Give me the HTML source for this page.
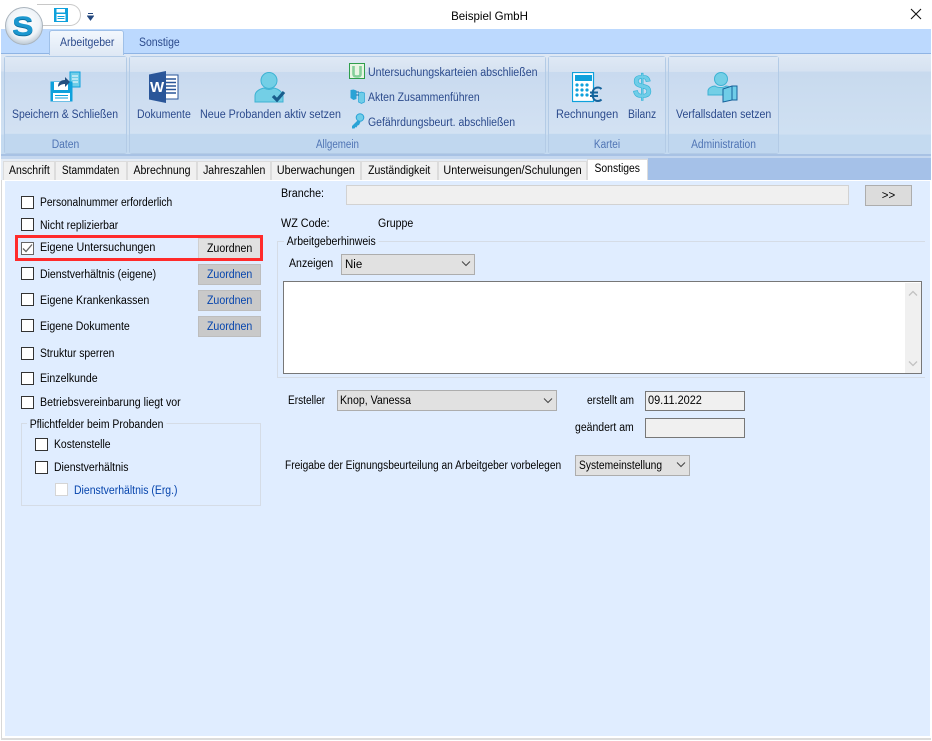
<!DOCTYPE html>
<html><head><meta charset="utf-8">
<style>
html,body{margin:0;padding:0;background:#fff}
#p{position:relative;width:932px;height:741px;overflow:hidden;background:#fff;font-family:"Liberation Sans",sans-serif;font-size:11.5px;color:#000}
#p div,#p span.t,#p svg{position:absolute}
.t{white-space:nowrap;line-height:14px;transform-origin:0 50%}
.rb{color:#2b4a8c}
.cap{color:#4f74b4;text-align:center;transform-origin:50% 50%}
.g{border:1px solid #b3cbe6;border-radius:3px;background:linear-gradient(#c6d8ee,#d6e4f4);box-sizing:border-box;top:56px;height:98px}
.gt{left:0;right:0;top:0;height:15px;background:linear-gradient(#dfe9f5,#d6e2f1)}
.gb{left:0;right:0;bottom:0;height:19px;background:#c0d7ef;border-top:1px solid #cfe0f2}
.tab{top:161px;height:19px;background:#f0f0f0;border:1px solid #dcdcdc;border-bottom:0;box-sizing:border-box;text-align:center;line-height:18px;white-space:nowrap;color:#000}
.tab span,.zb span{display:inline-block}
.cb{width:13px;height:13px;border:1px solid #333;background:#fff;box-sizing:border-box}
.zb{left:198px;width:63px;height:21px;background:#c9c9c9;border:1px solid #bdbdbd;box-sizing:border-box;color:#0645ad;text-align:center;line-height:21px}
.zb span{transform:scaleX(.92)}
.sel{background:#e1e1e1;border:1px solid #adadad;box-sizing:border-box}
.in{background:#f0f0f0;box-sizing:border-box}
</style></head><body><div id="p">

<!-- title bar -->
<div style="left:37px;top:4px;width:44px;height:22px;background:#fff;border:1px solid #c8c8c8;border-left:0;border-radius:0 12px 12px 0;box-sizing:border-box"></div>
<svg style="left:54px;top:8px" width="14" height="14" viewBox="0 0 14 14"><rect width="14" height="14" fill="#0ea1dc"/><rect x="2.500" y="1" width="8.500" height="3.500" fill="#fff"/><rect x="2.500" y="6" width="9" height="7" fill="#fff"/><path d="M3.500 8.500h7M3.500 10.500h7" stroke="#0ea1dc"/></svg>
<svg style="left:87px;top:13px" width="7" height="8" viewBox="0 0 7 8"><path d="M1 .5h5M.5 3h6L3.500 7z" stroke="#24487f" fill="#24487f" stroke-width="1"/></svg>
<span class="t cap" style="left:0;width:979px;top:9px;font-size:12px;color:#000;transform:scaleX(.96)">Beispiel GmbH</span>
<svg style="left:910px;top:8px" width="12" height="12" viewBox="0 0 12 12"><path d="M1 1l10 10M11 1L1 11" stroke="#111" stroke-width="1.100"/></svg>

<!-- ribbon tabs bar -->
<div style="left:1px;top:29px;width:930px;height:25px;background:#bcd9fe"></div>
<div style="left:1px;top:53px;width:930px;height:102px;background:linear-gradient(#dfe9f5 0,#d6e2f1 17px,#c8daee 18px,#cfe0f2 80px,#c4daf0 81px);border-top:1px solid #8fb4e4;box-sizing:border-box"></div>
<div style="left:49px;top:30px;width:75px;height:25px;background:linear-gradient(#f2f7fd,#dfe9f5);border:1px solid #9fc0e8;border-bottom:0;border-radius:3px 3px 0 0;box-sizing:border-box"></div>
<span class="t rb" style="left:60px;top:36px;transform:scaleX(.915)">Arbeitgeber</span>
<span class="t rb" style="left:139px;top:36px;transform:scaleX(.91)">Sonstige</span>

<!-- S logo -->
<div style="left:5px;top:7px;width:38px;height:38px;border-radius:50%;background:radial-gradient(circle at 50% 40%,#ffffff 0,#eef3f8 55%,#b9c6d2 80%,#8e9aa5 100%);border:1px solid #aab4bd;box-sizing:border-box"></div>
<span class="t" style="left:12px;top:13px;font-size:27px;line-height:27px;font-weight:bold;color:#1b97cf;transform:scaleX(1.2);text-shadow:0 1px 0 #0e6d9e">S</span>

<!-- ribbon groups -->
<div class="g" style="left:4px;width:123px"><div class="gt"></div><div class="gb"></div></div>
<div class="g" style="left:129px;width:417px"><div class="gt"></div><div class="gb"></div></div>
<div class="g" style="left:548px;width:118px"><div class="gt"></div><div class="gb"></div></div>
<div class="g" style="left:668px;width:111px"><div class="gt"></div><div class="gb"></div></div>

<span class="t rb" style="left:12px;top:108px;transform:scaleX(.906)">Speichern &amp; Schließen</span>
<span class="t rb" style="left:137px;top:108px;transform:scaleX(.915)">Dokumente</span>
<span class="t rb" style="left:200px;top:108px;transform:scaleX(.934)">Neue Probanden aktiv setzen</span>
<span class="t rb" style="left:368px;top:66px;transform:scaleX(.924)">Untersuchungskarteien abschließen</span>
<span class="t rb" style="left:368px;top:91px;transform:scaleX(.91)">Akten Zusammenführen</span>
<span class="t rb" style="left:368px;top:116px;transform:scaleX(.913)">Gefährdungsbeurt. abschließen</span>
<span class="t rb" style="left:556px;top:108px;transform:scaleX(.954)">Rechnungen</span>
<span class="t rb" style="left:628px;top:108px;transform:scaleX(.9)">Bilanz</span>
<span class="t rb" style="left:676px;top:108px;transform:scaleX(.92)">Verfallsdaten setzen</span>

<span class="t cap" style="left:4px;width:123px;top:138px;transform:scaleX(.9)">Daten</span>
<span class="t cap" style="left:129px;width:417px;top:138px;transform:scaleX(.85)">Allgemein</span>
<span class="t cap" style="left:548px;width:118px;top:138px;transform:scaleX(.87)">Kartei</span>
<span class="t cap" style="left:668px;width:111px;top:138px;transform:scaleX(.89)">Administration</span>

<!-- ribbon icons -->
<svg style="left:49px;top:70px" width="33" height="33" viewBox="0 0 33 33"><rect x="21" y="2" width="10" height="15" fill="#6fcde8" stroke="#0ea1dc"/><path d="M23 6h6M23 9h6M23 12h6" stroke="#fff"/><rect x="1.500" y="11.500" width="22" height="20" fill="#0ea1dc"/><rect x="5" y="12" width="14" height="8" fill="#fff"/><rect x="4" y="23" width="17" height="8" fill="#fff"/><path d="M6 25.500h13M6 28h13" stroke="#0ea1dc"/><path d="M9 17c0-5 3-7 7-7V7l5 5-5 5v-3c-3 0-5 1-7 3z" fill="#24507f"/></svg>
<svg style="left:148px;top:71px" width="31" height="32" viewBox="0 0 31 32"><rect x="16" y="4" width="14" height="24" fill="#fff" stroke="#2a5699"/><path d="M18 8h10M18 11.500h10M18 15h10M18 18.500h10M18 22h10" stroke="#2a5699" stroke-width="1.600"/><path d="M1 3.500 18 0v32L1 28.500z" fill="#2a5699"/><text x="2" y="21" font-family="Liberation Sans" font-weight="bold" font-size="15" fill="#fff">W</text></svg>
<svg style="left:254px;top:71px" width="33" height="32" viewBox="0 0 33 32"><circle cx="15" cy="9.500" r="8" fill="#73cfe6" stroke="#3eb2d3"/><path d="M1 31v-6c0-5 5-7 9-8 3 2 7 2 10 0 4 1 8 3 9 8v6z" fill="#73cfe6" stroke="#3eb2d3"/><path d="M19 25l4 4 7-8" fill="none" stroke="#195d8c" stroke-width="3.200"/></svg>
<svg style="left:349px;top:63px" width="17" height="17" viewBox="0 0 17 17"><rect x=".5" y=".5" width="15" height="15" fill="#e9f5e4" stroke="#2f9e4c"/><path d="M4.500 3v8c0 2 1 2.500 3.500 2.500S11.500 13 11.500 11V3" fill="none" stroke="#84cf9a" stroke-width="2.600"/></svg>
<svg style="left:350px;top:88px" width="15" height="16" viewBox="0 0 15 16"><path d="M.5 2l3-.5 3 1V11l-3 1-3-2z" fill="#2aa3d6"/><path d="M8.500 5l3-1 3 1v9l-3 1.500-3-1.500z" fill="#6fcde8" stroke="#2aa3d6" stroke-width=".7"/><path d="M6 4h3M6 7h3" stroke="#1d6fa5"/></svg>
<svg style="left:350px;top:113px" width="15" height="16" viewBox="0 0 15 16"><circle cx="10" cy="4.500" r="3.800" fill="#6fcde8" stroke="#2aa3d6"/><path d="M8 7 2 13v2.500h2.500l1-1.500 1 .5 1-2 1.500-.5 1.500-3z" fill="#2aa3d6"/></svg>
<svg style="left:572px;top:72px" width="31" height="31" viewBox="0 0 31 31"><rect x=".500" y=".500" width="21" height="29" fill="#fff" stroke="#0ea1dc" stroke-width="1.200"/><rect x="3" y="3" width="17" height="6" fill="#0ea1dc"/><g fill="#0ea1dc"><circle cx="5" cy="13" r="1.600"/><circle cx="10" cy="13" r="1.600"/><circle cx="15" cy="13" r="1.600"/><circle cx="5" cy="18" r="1.600"/><circle cx="10" cy="18" r="1.600"/><circle cx="15" cy="18" r="1.600"/><circle cx="5" cy="23" r="1.600"/><circle cx="10" cy="23" r="1.600"/><circle cx="15" cy="23" r="1.600"/></g><path d="M29.500 17c-1-1-2-1.500-3.500-1.500-4 0-5.500 3-5.500 6.500s1.500 7 5.500 7c1.500 0 2.500-.5 3.500-1.500M18 20.500h8M18 24h8" fill="none" stroke="#17639b" stroke-width="2"/></svg>
<svg style="left:632px;top:70px" width="22" height="34" viewBox="0 0 22 34"><text x="1" y="28" font-family="Liberation Sans" font-size="33" font-weight="bold" fill="#6fcde8" stroke="#2fb1d6" stroke-width=".6">$</text></svg>
<svg style="left:707px;top:71px" width="33" height="32" viewBox="0 0 33 32"><circle cx="14" cy="8" r="6.500" fill="#73cfe6" stroke="#3eb2d3"/><path d="M1 24v-4c0-3 4-5 7-5 3 2 8 2 11 0 3 0 6 2 7 4v5z" fill="#73cfe6" stroke="#3eb2d3"/><path d="M16 18l9-3h5v14h-5l-9 2z" fill="#6fcde8" stroke="#17639b"/><path d="M25 15v14" stroke="#17639b"/></svg>

<!-- tab strip -->
<div style="left:1px;top:154px;width:930px;height:2px;background:#a8c2e4"></div>
<div style="left:1px;top:156px;width:930px;height:3px;background:#c4d7ef"></div>
<div style="left:1px;top:159px;width:647px;height:21px;background:#e6edf6"></div>
<div style="left:648px;top:158px;width:283px;height:22px;background:#a5c1e8"></div>
<div class="tab" style="left:3px;width:52px"><span style="transform:scaleX(.91)">Anschrift</span></div>
<div class="tab" style="left:55px;width:72px"><span style="transform:scaleX(.88)">Stammdaten</span></div>
<div class="tab" style="left:127px;width:70px"><span style="transform:scaleX(.92)">Abrechnung</span></div>
<div class="tab" style="left:197px;width:74px"><span style="transform:scaleX(.91)">Jahreszahlen</span></div>
<div class="tab" style="left:271px;width:90px"><span style="transform:scaleX(.93)">Überwachungen</span></div>
<div class="tab" style="left:361px;width:77px"><span style="transform:scaleX(.91)">Zuständigkeit</span></div>
<div class="tab" style="left:438px;width:149px"><span style="transform:scaleX(.94)">Unterweisungen/Schulungen</span></div>
<div class="tab" style="left:587px;width:61px;top:159px;height:21px;background:#fff;line-height:18px"><span style="transform:scaleX(.9)">Sonstiges</span></div>

<!-- content -->
<div style="left:1px;top:180px;width:930px;height:556px;background:#fff"></div>
<div style="left:1px;top:180px;width:1px;height:559px;background:#d8d8d8"></div>
<div style="left:1px;top:738px;width:930px;height:2px;background:#dcdcdc"></div>
<div style="left:5px;top:181px;width:925px;height:555px;background:#e0edff"></div>

<!-- left checkboxes -->
<div class="cb" style="left:21px;top:196px"></div><span class="t" style="left:40px;top:196px;transform:scaleX(.892)">Personalnummer erforderlich</span>
<div class="cb" style="left:21px;top:218px"></div><span class="t" style="left:40px;top:219px;transform:scaleX(.907)">Nicht replizierbar</span>
<div class="cb" style="left:21px;top:242px;border-color:#666"></div><svg style="left:22px;top:243px" width="11" height="11" viewBox="0 0 11 11"><path d="M1 5.500l3 3 6-7" fill="none" stroke="#666" stroke-width="1.300"/></svg><span class="t" style="left:40px;top:241px;transform:scaleX(.935)">Eigene Untersuchungen</span>
<div class="zb" style="top:238px;background:#e1e1e1;color:#000;border-color:#cfcfcf"><span>Zuordnen</span></div>
<div style="left:15px;top:235px;width:248px;height:26px;border:3px solid #ff2b2b;box-sizing:border-box"></div>
<div class="cb" style="left:21px;top:267px"></div><span class="t" style="left:40px;top:268px;transform:scaleX(.913)">Dienstverhältnis (eigene)</span>
<div class="zb" style="top:264px"><span>Zuordnen</span></div>
<div class="cb" style="left:21px;top:293px"></div><span class="t" style="left:40px;top:294px;transform:scaleX(.924)">Eigene Krankenkassen</span>
<div class="zb" style="top:290px"><span>Zuordnen</span></div>
<div class="cb" style="left:21px;top:319px"></div><span class="t" style="left:40px;top:320px;transform:scaleX(.918)">Eigene Dokumente</span>
<div class="zb" style="top:316px"><span>Zuordnen</span></div>
<div class="cb" style="left:21px;top:347px"></div><span class="t" style="left:40px;top:347px;transform:scaleX(.902)">Struktur sperren</span>
<div class="cb" style="left:21px;top:372px"></div><span class="t" style="left:40px;top:372px;transform:scaleX(.92)">Einzelkunde</span>
<div class="cb" style="left:21px;top:396px"></div><span class="t" style="left:40px;top:396px;transform:scaleX(.921)">Betriebsvereinbarung liegt vor</span>

<div style="left:21px;top:423px;width:240px;height:83px;border:1px solid #d5dce6;box-sizing:border-box"></div>
<span class="t" style="left:27px;top:418px;background:#e0edff;padding:0 3px;transform:scaleX(.905)">Pflichtfelder beim Probanden</span>
<div class="cb" style="left:35px;top:438px"></div><span class="t" style="left:54px;top:438px;transform:scaleX(.903)">Kostenstelle</span>
<div class="cb" style="left:35px;top:461px"></div><span class="t" style="left:54px;top:461px;transform:scaleX(.91)">Dienstverhältnis</span>
<div class="cb" style="left:55px;top:483px;border-color:#d5d5d5"></div><span class="t" style="left:74px;top:484px;color:#0645ad;transform:scaleX(.91)">Dienstverhältnis (Erg.)</span>

<!-- right -->
<span class="t" style="left:281px;top:187px;transform:scaleX(.935)">Branche:</span>
<div class="in" style="left:346px;top:185px;width:503px;height:20px;border:1px solid #d2d2d2"></div>
<div style="left:865px;top:185px;width:47px;height:21px;background:#dcdcdc;border:1px solid #adadad;box-sizing:border-box;text-align:center;line-height:21px">&gt;&gt;</div>
<span class="t" style="left:281px;top:217px;transform:scaleX(.94)">WZ Code:</span>
<span class="t" style="left:378px;top:217px;transform:scaleX(.92)">Gruppe</span>

<div style="left:277px;top:241px;width:648px;height:137px;border:1px solid #d5dce6;border-right:0;box-sizing:border-box"></div>
<span class="t" style="left:284px;top:235px;background:#e0edff;padding:0 3px;transform:scaleX(.91)">Arbeitgeberhinweis</span>
<span class="t" style="left:289px;top:257px;transform:scaleX(.92)">Anzeigen</span>
<div class="sel" style="left:341px;top:254px;width:134px;height:21px"></div>
<span class="t" style="left:345px;top:258px">Nie</span>
<svg style="left:461px;top:261px" width="10" height="6" viewBox="0 0 10 6"><path d="M1 .5l4 4 4-4" fill="none" stroke="#444"/></svg>
<div style="left:283px;top:281px;width:639px;height:93px;background:#fff;border:1px solid #777;box-sizing:border-box"></div>
<div style="left:905px;top:283px;width:16px;height:90px;background:#f0f0f0"></div>
<svg style="left:908px;top:290px" width="10" height="6" viewBox="0 0 10 6"><path d="M1 5.500l4-4 4 4" fill="none" stroke="#c2c2c2" stroke-width="1.300"/></svg>
<svg style="left:908px;top:361px" width="10" height="6" viewBox="0 0 10 6"><path d="M1 .5l4 4 4-4" fill="none" stroke="#c2c2c2" stroke-width="1.300"/></svg>

<span class="t" style="left:288px;top:394px;transform:scaleX(.88)">Ersteller</span>
<div class="sel" style="left:337px;top:390px;width:220px;height:21px"></div>
<span class="t" style="left:340px;top:394px;transform:scaleX(.92)">Knop, Vanessa</span>
<svg style="left:543px;top:398px" width="10" height="6" viewBox="0 0 10 6"><path d="M1 .5l4 4 4-4" fill="none" stroke="#444"/></svg>
<span class="t" style="left:587px;top:394px;transform:scaleX(.887)">erstellt am</span>
<div class="in" style="left:645px;top:391px;width:100px;height:20px;border:1px solid #777"></div>
<span class="t" style="left:648px;top:394px;transform:scaleX(.95)">09.11.2022</span>
<span class="t" style="left:575px;top:421px;transform:scaleX(.91)">geändert am</span>
<div class="in" style="left:645px;top:418px;width:100px;height:20px;border:1px solid #777"></div>

<span class="t" style="left:285px;top:459px;transform:scaleX(.887)">Freigabe der Eignungsbeurteilung an Arbeitgeber vorbelegen</span>
<div class="sel" style="left:575px;top:455px;width:115px;height:21px"></div>
<span class="t" style="left:579px;top:459px;transform:scaleX(.89)">Systemeinstellung</span>
<svg style="left:676px;top:462px" width="10" height="6" viewBox="0 0 10 6"><path d="M1 .5l4 4 4-4" fill="none" stroke="#444"/></svg>

</div></body></html>
